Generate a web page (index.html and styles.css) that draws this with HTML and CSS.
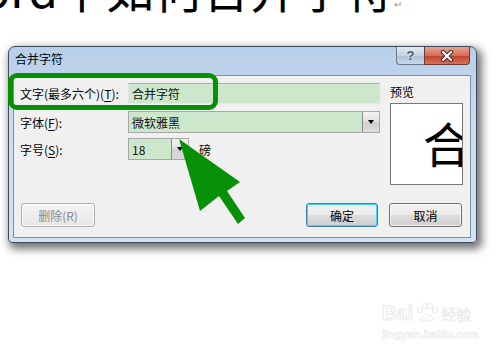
FILE: index.html
```html
<!DOCTYPE html>
<html>
<head>
<meta charset="utf-8">
<link rel="stylesheet" href="styles.css">
</head>
<body>
<div class="page">
  <div class="heading"><span class="heading-text">Word中如何合并字符<span class="para">↵</span></span></div>
  <div class="dialog">
    <div class="titlebar">
      <span class="title">合并字符</span>
      <div class="controls">
        <span class="btn-help">?</span>
        <span class="btn-close"><svg width="16" height="12" viewBox="0 0 16 12"><path d="M4 2 L12 10 M12 2 L4 10" stroke="#3a2a28" stroke-width="4.2" stroke-linecap="round"/><path d="M4 2 L12 10 M12 2 L4 10" stroke="#ffffff" stroke-width="2.2" stroke-linecap="round"/></svg></span>
      </div>
    </div>
    <div class="client">
      <div class="top">
        <div class="form">
          <div class="row r1">
            <span class="label">文字(最多六个)(<u>T</u>):</span>
            <div class="field wide">合并字符</div>
          </div>
          <div class="row r2">
            <span class="label">字体(<u>F</u>):</span>
            <div class="combo wide"><span class="value">微软雅黑</span><span class="drop"><i></i></span></div>
          </div>
          <div class="row r3">
            <span class="label">字号(<u>S</u>):</span>
            <div class="combo small"><span class="value">18</span><span class="drop"><i></i></span></div>
            <span class="unit">磅</span>
          </div>
        </div>
        <div class="preview">
          <div class="preview-label">预览</div>
          <div class="preview-box"><span class="preview-glyph">合</span></div>
        </div>
      </div>
      <div class="buttons">
        <span class="button disabled">删除(R)</span>
        <span class="button default">确定</span>
        <span class="button cancel">取消</span>
      </div>
    </div>
  </div>
  <div class="highlight"></div>
  <svg class="arrow" width="500" height="350" viewBox="0 0 500 350">
    <polygon points="179,139 240,182 227,191 245,218 238,224 219,196 200,211" fill="#069006"/>
  </svg>
  <div class="watermark">
    <div class="wm-top">
      <span class="wm-bai">Bai</span>
      <svg class="wm-paw" width="26" height="22" viewBox="0 0 26 22">
        <g fill="none" stroke="#ececec" stroke-width="1.2">
          <ellipse cx="6" cy="8" rx="2.5" ry="3"/>
          <ellipse cx="11" cy="4" rx="2.5" ry="3"/>
          <ellipse cx="16" cy="4" rx="2.5" ry="3"/>
          <ellipse cx="21" cy="8" rx="2.5" ry="3"/>
          <path d="M6 17 Q13 8 20 17 Q13 22 6 17 Z"/>
        </g>
        <text x="9" y="19" font-size="6" fill="#ececec" font-family="Liberation Sans">du</text>
      </svg>
      <span class="wm-cn">经验</span>
    </div>
    <div class="wm-url">jingyan.baidu.com</div>
  </div>
</div>
</body>
</html>
```
FILE: styles.css
```css
* { box-sizing: border-box; }
html, body { margin: 0; padding: 0; background: #ffffff; }
body {
  width: 500px;
  height: 350px;
  overflow: hidden;
  font-family: "Noto Sans CJK SC", "Liberation Sans", sans-serif;
  font-size: 12px;
  color: #000;
}
.page { position: relative; width: 500px; height: 350px; }

.heading {
  height: 46px;
  overflow: hidden;
}
.heading-text {
  display: block;
  margin-top: -37px;
  margin-left: -61px;
  font-family: "Noto Sans CJK SC", sans-serif;
  font-size: 48px;
  line-height: 48px;
  white-space: nowrap;
  color: #000;
}
.para {
  font-size: 10px;
  color: #9a9a9a;
  margin-left: 0;
}

.dialog {
  margin-left: 8px;
  width: 469px;
  height: 197px;
  border: 1px solid #3f4b58;
  border-radius: 7px 7px 4px 4px;
  background: linear-gradient(#b7cfe9, #cbdcf0 40%, #d3e2f3);
  box-shadow: 3px 4px 9px 2px rgba(0, 0, 0, 0.55);
  display: flex;
  flex-direction: column;
}
.titlebar {
  height: 28px;
  display: flex;
  justify-content: space-between;
  align-items: flex-start;
}
.title {
  padding-left: 6px;
  line-height: 22px;
  margin-top: 1px;
  color: #000;
}
.controls {
  display: flex;
  margin-right: 6px;
}
.btn-help {
  width: 28px;
  height: 18px;
  border: 1px solid #6a7888;
  border-top: none;
  border-right: none;
  border-radius: 0 0 0 4px;
  background: linear-gradient(#e2ebf5, #c4d3e3 50%, #aebfd2 51%, #c8d8ea);
  color: #4a5562;
  font-family: "Liberation Sans", sans-serif;
  font-weight: bold;
  font-size: 13px;
  line-height: 17px;
  text-align: center;
  text-shadow: 0 0 2px #fff;
}
.btn-close {
  width: 46px;
  height: 18px;
  border: 1px solid #6b3a34;
  border-top: none;
  border-radius: 0 0 4px 0;
  background: linear-gradient(#e8a493, #d56c58 50%, #c2402a 51%, #d9715a);
  display: flex;
  align-items: center;
  justify-content: center;
}

.client {
  margin: 0 5px 4px 4px;
  height: 163px;
  border: 1px solid #7f8fa2;
  background: #f0f0f0;
  padding: 7px 8px 0 6px;
  display: flex;
  flex-direction: column;
}
.top {
  display: flex;
  gap: 10px;
  height: 102px;
}
.form { width: 360px; }
.row {
  display: flex;
  align-items: center;
}
.r1 { height: 21px; }
.r2 { height: 22px; margin-top: 7px; }
.r3 { height: 22px; margin-top: 5px; }
.label {
  width: 108px;
  white-space: nowrap;
  color: #000;
}
.label u { text-decoration-thickness: 1px; text-underline-offset: 2px; }
.field, .combo {
  height: 100%;
  background: #cde7cd;
  border: 1px solid #abadb3;
  border-color: #abadb3 #dbdfe6 #e3e9ef #e2e3ea;
  display: flex;
  align-items: center;
}
.field { padding-left: 3px; color: #111; }
.wide { width: 252px; }
.combo { border: 1px solid #a7a7a7; padding-left: 3px; justify-content: space-between; }
.combo.small { width: 61px; }
.value { color: #111; }
.drop {
  width: 17px;
  height: 100%;
  border-left: 1px solid #8a8a8a;
  background: linear-gradient(#f3f3f3, #e0e0e0 50%, #d0d0d0 51%, #dcdcdc);
  display: flex;
  align-items: center;
  justify-content: center;
}
.drop i {
  width: 0;
  height: 0;
  border-left: 3.5px solid transparent;
  border-right: 3.5px solid transparent;
  border-top: 4px solid #000;
}
.unit { margin-left: 10px; }

.preview { width: 73px; }
.preview-label { line-height: 18px; }
.preview-box {
  margin-top: 2px;
  height: 82px;
  background: #ffffff;
  border: 1px solid #767676;
  overflow: hidden;
  white-space: nowrap;
  padding: 14px 0 0 32px;
}
.preview-glyph {
  display: block;
  font-size: 48px;
  line-height: 48px;
}

.buttons {
  margin-top: 18px;
  display: flex;
  height: 24px;
}
.button {
  height: 24px;
  border: 1px solid #707070;
  border-radius: 3px;
  background: linear-gradient(#f2f2f2, #ebebeb 50%, #dddddd 51%, #cfcfcf);
  display: flex;
  align-items: center;
  justify-content: center;
  box-shadow: inset 0 0 0 1px rgba(255, 255, 255, 0.7);
}
.disabled {
  width: 74px;
  margin-left: 1px;
  color: #8a8a8a;
  border-color: #adb2b5;
  background: linear-gradient(#f4f4f4, #e6e6e6);
}
.default {
  width: 72px;
  margin-left: auto;
  border-color: #3c7fb1;
  box-shadow: inset 0 0 0 1px #48d4f8;
  background: linear-gradient(#f2f2f2, #ebebeb 50%, #dddddd 51%, #cfcfcf);
}
.cancel { width: 73px; margin-left: 11px; }

.highlight {
  position: absolute;
  left: 8px;
  top: 73px;
  width: 210px;
  height: 37px;
  border: 5px solid #069006;
  border-radius: 9px;
}
.arrow {
  position: absolute;
  left: 0;
  top: 0;
  pointer-events: none;
}
.watermark {
  position: absolute;
  left: 382px;
  top: 300px;
  font-family: "Liberation Sans", sans-serif;
}
.wm-top { display: flex; align-items: center; height: 26px; }
.wm-bai { font-size: 20px; font-weight: bold; color: transparent; -webkit-text-stroke: 0.8px #e8e8e8; }
.wm-paw { margin: 0 1px; }
.wm-cn { font-family: "Noto Sans CJK SC", sans-serif; font-size: 15px; color: transparent; -webkit-text-stroke: 0.6px #e6e6e6; }
.wm-url { font-size: 11px; font-weight: bold; color: transparent; -webkit-text-stroke: 0.6px #e8e8e8; margin-top: 2px; }
```
